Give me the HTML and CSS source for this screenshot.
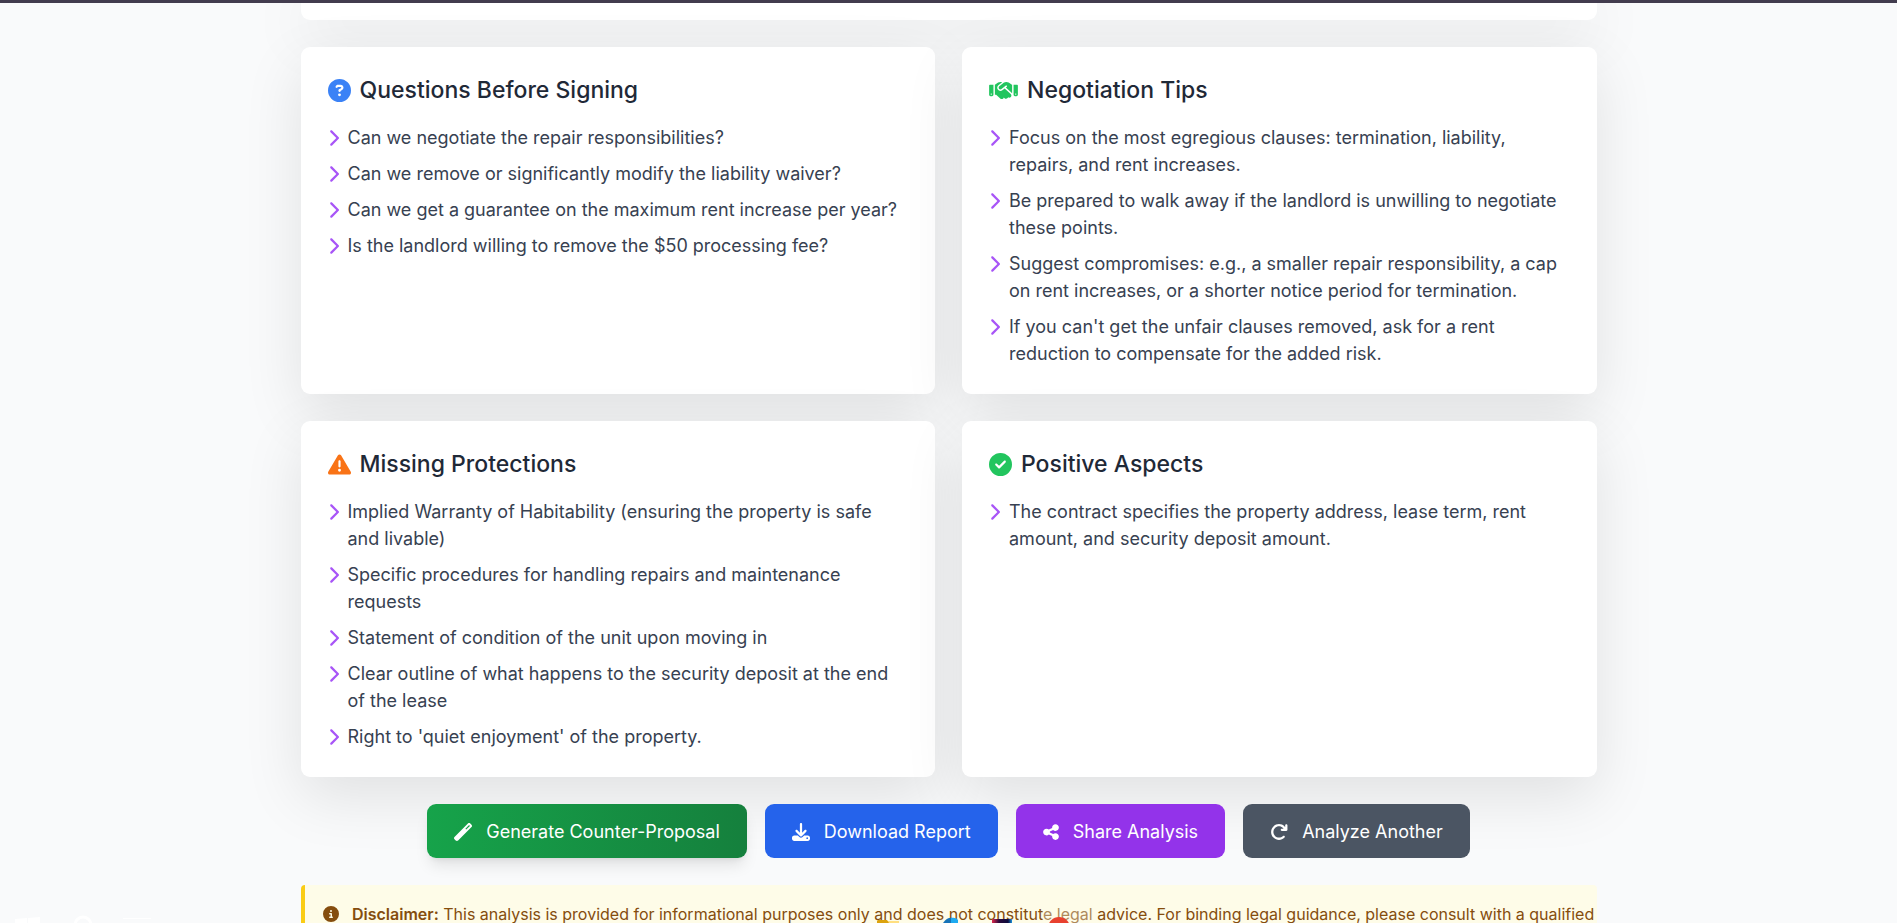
FILE: index.html
```html
<!DOCTYPE html>
<html lang="en">
<head>
    <meta charset="UTF-8">
    <meta name="viewport" content="width=device-width, initial-scale=1.0">
    <title>Contract Analysis</title>
    <link rel="stylesheet" href="styles.css">
</head>
<body>

    <!-- Shared icons -->
    <svg class="icon-defs" aria-hidden="true">
        <symbol id="chevron" viewBox="0 0 320 512">
            <path d="M310.6 233.4c12.500 12.500 12.500 32.800 0 45.300l-192 192c-12.500 12.500-32.800 12.500-45.300 0s-12.500-32.800 0-45.300L242.700 256 73.400 86.600c-12.500-12.500-12.500-32.800 0-45.300s32.800-12.500 45.300 0l192 192z"/>
        </symbol>
    </svg>

    <main class="container">
        <section class="card card-previous"></section>

        <div class="card-grid">
            <section class="card">
                <h3 class="card-title">
                    <svg class="title-icon blue" viewBox="0 0 512 512"><path d="M256 512A256 256 0 1 0 256 0a256 256 0 1 0 0 512zM169.800 165.300c7.900-22.300 29.100-37.300 52.800-37.300h58.300c34.900 0 63.100 28.300 63.100 63.100c0 22.600-12.100 43.500-31.700 54.800L280 264.400c-.2 13-10.900 23.600-24 23.600c-13.300 0-24-10.700-24-24V250.500c0-8.600 4.600-16.500 12.100-20.800l44.300-25.400c4.700-2.700 7.600-7.700 7.600-13.100c0-8.400-6.800-15.100-15.100-15.100H222.600c-3.400 0-6.400 2.100-7.500 5.300l-.4 1.200c-4.400 12.500-18.200 19-30.600 14.600s-19-18.200-14.600-30.600l.4-1.200zM224 352a32 32 0 1 1 64 0 32 32 0 1 1-64 0z"/></svg>
                    Questions Before Signing
                </h3>
                <ul class="card-list">
                    <li><svg class="chevron"><use href="#chevron"/></svg><span>Can we negotiate the repair responsibilities?</span></li>
                    <li><svg class="chevron"><use href="#chevron"/></svg><span>Can we remove or significantly modify the liability waiver?</span></li>
                    <li><svg class="chevron"><use href="#chevron"/></svg><span>Can we get a guarantee on the maximum rent increase per year?</span></li>
                    <li><svg class="chevron"><use href="#chevron"/></svg><span>Is the landlord willing to remove the $50 processing fee?</span></li>
                </ul>
            </section>

            <section class="card">
                <h3 class="card-title">
                    <svg class="title-icon wide green" viewBox="0 0 640 512"><path d="M323.400 85.200l-96.800 78.400c-16.100 13-19.200 36.400-7 53.100c12.900 17.800 38 21.300 55.300 7.800l99.300-77.200c7-5.400 17-4.200 22.500 2.800s4.200 17-2.800 22.500l-20.900 16.200L512 316.800V128h-.7l-3.900-2.500L434.800 79c-15.300-9.800-33.200-15-51.400-15c-21.800 0-43 7.500-60 21.200zm22.800 124.400l-51.700 40.200C263 274.300 217.300 268 193.700 235.600c-22.200-30.500-16.600-73.100 12.700-96.800l83.200-67.300c-11.600-4.900-24.100-7.400-36.800-7.400C234 64 215.700 69.600 200 80l-72 48V352h28.200l91.400 83.400c19.600 17.900 49.900 16.500 67.800-3.100c5.500-6.100 9.200-13.200 11.100-20.600l17 15.600c19.500 17.900 49.900 16.600 67.800-2.900c4.500-4.900 7.800-10.600 9.900-16.500c19.400 13 45.800 10.300 62.100-7.500c17.900-19.500 16.600-49.900-2.900-67.800l-134.200-123zM16 128c-8.800 0-16 7.200-16 16V352c0 17.700 14.300 32 32 32H64c17.700 0 32-14.300 32-32V128H16zM48 320a16 16 0 1 1 0 32 16 16 0 1 1 0-32zM544 128V352c0 17.700 14.300 32 32 32h32c17.700 0 32-14.300 32-32V144c0-8.800-7.200-16-16-16H544zm32 208a16 16 0 1 1 32 0 16 16 0 1 1-32 0z"/></svg>
                    Negotiation Tips
                </h3>
                <ul class="card-list">
                    <li><svg class="chevron"><use href="#chevron"/></svg><span>Focus on the most egregious clauses: termination, liability, repairs, and rent increases.</span></li>
                    <li><svg class="chevron"><use href="#chevron"/></svg><span>Be prepared to walk away if the landlord is unwilling to negotiate these points.</span></li>
                    <li><svg class="chevron"><use href="#chevron"/></svg><span>Suggest compromises: e.g., a smaller repair responsibility, a cap on rent increases, or a shorter notice period for termination.</span></li>
                    <li><svg class="chevron"><use href="#chevron"/></svg><span>If you can't get the unfair clauses removed, ask for a rent reduction to compensate for the added risk.</span></li>
                </ul>
            </section>

            <section class="card">
                <h3 class="card-title">
                    <svg class="title-icon orange" viewBox="0 0 512 512"><path d="M256 32c14.200 0 27.300 7.500 34.500 19.800l216 368c7.300 12.400 7.300 27.700 .2 40.100S486.300 480 472 480H40c-14.300 0-27.600-7.700-34.700-20.100s-7-27.800 .2-40.100l216-368C228.700 39.500 241.800 32 256 32zm0 128c-13.300 0-24 10.700-24 24V296c0 13.300 10.700 24 24 24s24-10.700 24-24V184c0-13.300-10.700-24-24-24zm32 224a32 32 0 1 0-64 0 32 32 0 1 0 64 0z"/></svg>
                    Missing Protections
                </h3>
                <ul class="card-list">
                    <li><svg class="chevron"><use href="#chevron"/></svg><span>Implied Warranty of Habitability (ensuring the property is safe and livable)</span></li>
                    <li><svg class="chevron"><use href="#chevron"/></svg><span>Specific procedures for handling repairs and maintenance requests</span></li>
                    <li><svg class="chevron"><use href="#chevron"/></svg><span>Statement of condition of the unit upon moving in</span></li>
                    <li><svg class="chevron"><use href="#chevron"/></svg><span>Clear outline of what happens to the security deposit at the end of the lease</span></li>
                    <li><svg class="chevron"><use href="#chevron"/></svg><span>Right to 'quiet enjoyment' of the property.</span></li>
                </ul>
            </section>

            <section class="card">
                <h3 class="card-title">
                    <svg class="title-icon green" viewBox="0 0 512 512"><path d="M256 512A256 256 0 1 0 256 0a256 256 0 1 0 0 512zM369 209L241 337c-9.400 9.400-24.600 9.400-33.900 0l-64-64c-9.400-9.400-9.400-24.600 0-33.900s24.600-9.400 33.900 0l47 47L335 175c9.400-9.400 24.600-9.400 33.900 0s9.400 24.600 0 33.900z"/></svg>
                    Positive Aspects
                </h3>
                <ul class="card-list">
                    <li><svg class="chevron"><use href="#chevron"/></svg><span>The contract specifies the property address, lease term, rent amount, and security deposit amount.</span></li>
                </ul>
            </section>
        </div>

        <!-- Action Buttons -->
        <div class="actions">
            <button type="button" class="btn btn-green">
                <svg class="btn-icon" viewBox="0 0 512 512"><path d="M14.100 463.300c-18.700-18.700-18.700-49.100 0-67.900L395.400 14.100c18.700-18.700 49.100-18.700 67.900 0l34.600 34.600c18.700 18.700 18.700 49.100 0 67.900L116.500 497.900c-18.700 18.700-49.100 18.700-67.900 0L14.100 463.300zM347.600 187.600l105-105-23.200-23.200-105 105 23.200 23.200z"/></svg>
                Generate Counter-Proposal
            </button>
            <button type="button" class="btn btn-blue">
                <svg class="btn-icon" viewBox="0 0 512 512"><path d="M288 32c0-17.700-14.300-32-32-32s-32 14.300-32 32V274.700l-73.400-73.400c-12.500-12.500-32.800-12.500-45.300 0s-12.500 32.800 0 45.300l128 128c12.500 12.500 32.800 12.500 45.300 0l128-128c12.500-12.500 12.500-32.800 0-45.300s-32.800-12.500-45.300 0L288 274.700V32zM64 352c-35.300 0-64 28.700-64 64v32c0 35.300 28.700 64 64 64H448c35.300 0 64-28.700 64-64V416c0-35.300-28.700-64-64-64H346.500l-45.300 45.300c-25 25-65.500 25-90.500 0L165.500 352H64zm368 56a24 24 0 1 1 0 48 24 24 0 1 1 0-48z"/></svg>
                Download Report
            </button>
            <button type="button" class="btn btn-purple">
                <svg class="btn-icon narrow" viewBox="0 0 448 512"><path d="M352 224c53 0 96-43 96-96s-43-96-96-96s-96 43-96 96c0 4 .2 8 .7 11.900l-94.100 47C145.400 170.200 121.900 160 96 160c-53 0-96 43-96 96s43 96 96 96c25.900 0 49.400-10.200 66.600-26.900l94.100 47c-.5 3.900-.7 7.800-.7 11.900c0 53 43 96 96 96s96-43 96-96s-43-96-96-96c-25.900 0-49.400 10.200-66.600 26.900l-94.100-47c.5-3.900 .7-7.800 .7-11.900s-.2-8-.7-11.900l94.100-47C302.600 213.800 326.100 224 352 224z"/></svg>
                Share Analysis
            </button>
            <button type="button" class="btn btn-gray">
                <svg class="btn-icon" viewBox="0 0 512 512"><path d="M386.300 160H336c-17.700 0-32 14.300-32 32s14.300 32 32 32H464c17.700 0 32-14.300 32-32V64c0-17.700-14.300-32-32-32s-32 14.300-32 32v51.200L414.400 97.600c-87.500-87.500-229.300-87.500-316.800 0s-87.500 229.300 0 316.800s229.300 87.500 316.800 0c12.500-12.500 12.500-32.800 0-45.300s-32.800-12.500-45.300 0c-62.500 62.500-163.800 62.500-226.300 0s-62.500-163.800 0-226.300s163.800-62.500 226.300 0L386.300 160z"/></svg>
                Analyze Another
            </button>
        </div>

        <div class="disclaimer">
            <p>
                <svg class="info-icon" viewBox="0 0 512 512"><path d="M256 512A256 256 0 1 0 256 0a256 256 0 1 0 0 512zM216 336h24V272H216c-13.300 0-24-10.700-24-24s10.700-24 24-24h48c13.300 0 24 10.700 24 24v88h8c13.300 0 24 10.700 24 24s-10.700 24-24 24H216c-13.300 0-24-10.700-24-24s10.700-24 24-24zm40-208a32 32 0 1 1 0 64 32 32 0 1 1 0-64z"/></svg>
                <strong>Disclaimer:</strong> This analysis is provided for informational purposes only and does not constitut<span class="faded">e legal</span> advice. For binding legal guidance, please consult with a qualified
            </p>
        </div>
    </main>

    <!-- Tops of the dock icons -->
    <div class="dock dock-left">
        <svg width="140" height="10" viewBox="0 0 140 10">
            <path fill="#fff" d="M0 6l12-1v5H0zM13 5l12-1v6H13z"/>
            <circle cx="68" cy="12" r="8" fill="none" stroke="#fff" stroke-width="3"/>
            <path fill="#fff" d="M108 5h28v1h-28z"/>
        </svg>
    </div>
    <div class="dock dock-center">
        <svg width="196" height="6" viewBox="0 0 196 6">
            <defs>
                <linearGradient id="dark"><stop offset="0" stop-color="#e0294f"/><stop offset=".35" stop-color="#2a0a3c"/><stop offset=".8" stop-color="#0d0b3d"/><stop offset="1" stop-color="#1b93e0"/></linearGradient>
            </defs>
            <path fill="#ffdf80" d="M9 4h13v2H9z"/>
            <path fill="#dca30f" d="M1 3h9l2 3H0V4z"/>
            <path fill="#1673b8" d="M66 6q4-6 10-5v5z"/>
            <path fill="#1eaaf0" d="M74 1q5-1 7 2v3h-7z"/>
            <path fill="url(#dark)" d="M115 6V3q0-1 1-1h18q1 0 1 1v3z"/>
            <circle cx="182" cy="11" r="11" fill="#e8412f"/>
        </svg>
    </div>

</body>
</html>
```
FILE: styles.css
```css
* {
    box-sizing: border-box;
}

body {
    margin: 0;
    height: 100vh;
    overflow: hidden;
    border-top: 3px solid #423c4e;
    background-color: #f9fafb;
    color: #374151;
    font-family: Inter, "Liberation Sans", sans-serif;
    font-size: 18px;
    line-height: 27px;
}

.icon-defs {
    display: none;
}

.container {
    max-width: 1296px;
    margin: 0 auto;
}

/* Cards */
.card {
    padding: 27px;
    background-color: #fff;
    border-radius: 9px;
    box-shadow: 0 20px 60px rgba(0, 0, 0, 0.1);
}

.card-previous {
    padding: 0;
    height: 17px;
    margin-bottom: 27px;
    border-radius: 0 0 9px 9px;
    box-shadow: 0 10px 60px rgba(0, 0, 0, 0.15);
}

.card-grid {
    display: grid;
    grid-template-columns: 1fr 1fr;
    gap: 27px;
    margin-bottom: 27px;
}

.card-title {
    display: flex;
    align-items: center;
    gap: 9px;
    margin: 0 0 18px;
    color: #1f2937;
    font-size: 23px;
    font-weight: 500;
    line-height: 32px;
}

.title-icon {
    width: 23px;
    height: 23px;
    fill: currentColor;
}

.title-icon.wide {
    width: 29px;
}

.blue {
    color: #3b82f6;
}

.green {
    color: #22c55e;
}

.orange {
    color: #f97316;
}

.card-list {
    display: flex;
    flex-direction: column;
    gap: 9px;
    margin: 0;
    padding: 0;
    list-style: none;
}

.card-list li {
    display: flex;
    gap: 9px;
}

.chevron {
    flex: none;
    width: 11px;
    height: 18px;
    margin-top: 5px;
    fill: #a855f7;
}

/* Action Buttons */
.actions {
    display: flex;
    flex-wrap: wrap;
    justify-content: center;
    gap: 18px;
    margin-bottom: 27px;
}

.btn {
    display: flex;
    align-items: center;
    gap: 14px;
    padding: 14px 27px 13px;
    border: none;
    border-radius: 9px;
    color: #fff;
    font-family: inherit;
    font-size: 18px;
    font-weight: 400;
    line-height: 27px;
    cursor: pointer;
}

.btn-icon {
    width: 18px;
    height: 18px;
    fill: currentColor;
}

.btn-icon.narrow {
    width: 16px;
}

.btn-green {
    background: linear-gradient(to right, #16a34a, #15803d);
    box-shadow: 0 10px 15px -3px rgba(0, 0, 0, 0.1), 0 4px 6px -4px rgba(0, 0, 0, 0.1);
}

.btn-blue {
    background-color: #2563eb;
}

.btn-purple {
    background-color: #9333ea;
}

.btn-gray {
    background-color: #4b5563;
}

/* Disclaimer */
.disclaimer {
    padding: 18px 0 18px 18px;
    border-left: 4px solid #facc15;
    border-radius: 4px;
    background-color: #fefce8;
    color: #854d0e;
    font-size: 16px;
    line-height: 22px;
}

.disclaimer p {
    margin: 0;
    white-space: nowrap;
}

.disclaimer strong {
    font-weight: 600;
}

.info-icon {
    width: 16px;
    height: 16px;
    margin-right: 9px;
    vertical-align: -2px;
    fill: currentColor;
}

.faded {
    opacity: 0.65;
}

/* Dock icons lie over the bottom edge */
.dock {
    position: fixed;
    bottom: 0;
    line-height: 0;
}

.dock-left {
    left: 15px;
}

.dock-center {
    left: 50%;
    margin-left: -72px;
}
```
